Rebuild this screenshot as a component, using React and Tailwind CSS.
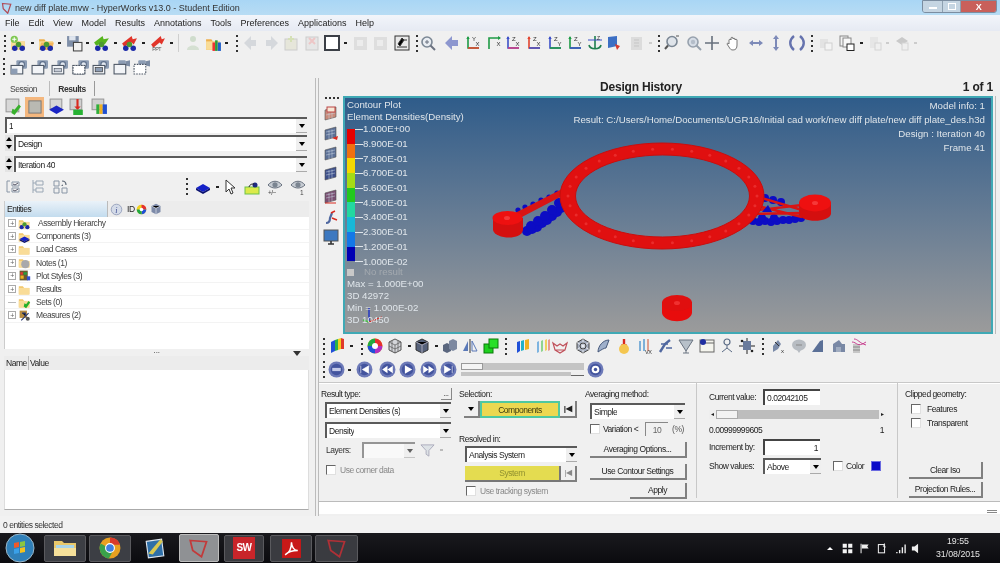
import React from "react";

const Blobs = () => (<>
  <circle cx="4.5" cy="12.5" r="2.6" fill="#1c2aa8"/><circle cx="11.5" cy="12.5" r="2.6" fill="#1c2aa8"/><circle cx="8" cy="9" r="2.6" fill="#4d9a30"/>
</>);
const Folder = ({f="#f2c66a"}) => (<><path d="M1 4h5l1.5 2H14v8H1z" fill={f}/><path d="M1 6h13v8H1z" fill="#f9dc97"/></>);
const Cam = ({b}) => (<>
  <rect x="6" y="2" width="10" height="8" rx="1" fill="#8d9db4"/><circle cx="11" cy="6" r="2.6" fill="#e2e8f0" stroke="#5d6f8a"/>
  <rect x="1" y="7" width="11" height="8" fill={b?"#dfe4ea":"#f2f4f7"} stroke="#4b5563"/>
</>);
const Axis = ({v,h,a,b,flip}) => (<>
  <path d={flip?"M14 3H3v11":"M3 2v11h11"} fill="none" stroke={flip?h:v} strokeWidth="1.6"/>
  <path d={flip?"M3 14H3":"M3 13h11"} fill="none" stroke={h} strokeWidth="1.6"/>
  <path d={flip?"M12 1l3 2-3 2z":"M1.3 4L3 1l1.7 3z"} fill={flip?h:v}/>
  <text x="7" y="6" fontSize="6" fontFamily="Liberation Sans" fill="#333">{a}</text><text x="10.5" y="11" fontSize="6" fontFamily="Liberation Sans" fill="#333">{b}</text>
</>);
const Pane = ({c="#5b6f96", e}) => (<>
  <path d="M2 4l11-3v10L2 14z" fill={c} stroke="#555" strokeWidth=".6"/><path d="M3 6l9-2M3 9l9-2M6 4v9M9 3.5v9" stroke="#c9d4e2" strokeWidth=".5"/>{e}
</>);
const Disc = () => (<><circle cx="8" cy="8" r="7.5" fill="#6d7ab8"/><circle cx="8" cy="8" r="5.4" fill="#43549e"/></>);

const kinds = {
  add: <><Folder/><circle cx="4" cy="4" r="3.4" fill="#7ec850"/><path d="M4 2v4M2 4h4" stroke="#fff"/><Blobs/></>,
  open: <><Folder f="#eeb04e"/><path d="M3 7h12l-2 7H1z" fill="#f5b65c"/><Blobs/></>,
  save: <><rect x="1" y="1" width="11" height="10" fill="#7f8fa8"/><rect x="3" y="1" width="6" height="4" fill="#dfe5ee"/><rect x="7" y="7" width="8" height="8" fill="#f1f1f1" stroke="#444"/></>,
  arG: <><path d="M1 7l8-6 1 3 5-1-4 6 -2-2-6 3z" fill="#57b51e"/><Blobs/></>,
  arR: <><path d="M1 8l9-7 1 3 4-1-3 6-2-2-7 4z" fill="#e1352a"/><Blobs/></>,
  ppt: <><path d="M2 9l9-8 1 3 3-1-3 6-2-2-6 5z" fill="#e1352a"/><text x="3" y="15.5" fontSize="5" fill="#555" fontFamily="Liberation Sans">PPT</text></>,
  person: <><circle cx="8" cy="4" r="3" fill="#cfdccc"/><path d="M2 15c0-6 12-6 12 0z" fill="#d5e0d2"/></>,
  fold: <><Folder f="#eeb04e"/><rect x="7" y="7" width="2.4" height="8" fill="#e33"/><rect x="9.5" y="5" width="2.4" height="10" fill="#2a9c3c"/><rect x="12" y="7" width="3" height="8" fill="#2460c8"/></>,
  diaL: <path d="M1 8l7-7v4h5v6H8v4z" fill="#d5d8dc"/>,
  diaR: <path d="M15 8L8 1v4H3v6h5v4z" fill="#d5d8dc"/>,
  docP: <><rect x="2" y="4" width="12" height="11" fill="#e6e6da" stroke="#ccc"/><path d="M8 1v6M5 4h6" stroke="#d5e0b6" strokeWidth="2"/></>,
  docX: <><rect x="2" y="2" width="12" height="13" fill="#e6e6e6" stroke="#ccc"/><path d="M5 3l6 6M11 3L5 9" stroke="#edc6c6" strokeWidth="2"/></>,
  sq: <rect x="1" y="1" width="14" height="14" fill="#fff" stroke="#3b3f46" strokeWidth="2"/>,
  grey: <><rect x="1" y="2" width="13" height="13" fill="#dedede"/><rect x="4" y="5" width="6" height="6" fill="#ececec"/></>,
  book: <><rect x="1" y="1" width="14" height="14" fill="#e9e9e9" stroke="#333"/><path d="M4 9l4-6 2 2-4 6zM8 5h5M3 12h10" stroke="#333"/></>,
  zoom: <><circle cx="7" cy="7" r="5" fill="#e9edf2" stroke="#7b8794" strokeWidth="1.6"/><path d="M10.5 10.5L15 15" stroke="#6b7280" strokeWidth="2"/><path d="M5 7h4M7 5v4" stroke="#6b7280"/></>,
  back: <path d="M1 8l7-7v4h6v6H8v4z" fill="#8d97cf"/>,
  ax1: <Axis v="#1f9b45" h="#e2452f" a="Y" b="X"/>,
  ax2: <Axis v="#e2452f" h="#1f9b45" a="" b="X" flip/>,
  ax3: <Axis v="#3c50c8" h="#cf3f82" a="Z" b="X"/>,
  ax4: <Axis v="#e2452f" h="#3c50c8" a="Z" b="X"/>,
  ax5: <Axis v="#3c50c8" h="#1f9b45" a="Z" b="Y"/>,
  ax6: <Axis v="#1f9b45" h="#3c50c8" a="Z" b="Y"/>,
  ax7: <><path d="M8 1v13M2 10c1 5 11 5 12 0" fill="none" stroke="#1f7f4f" strokeWidth="1.6"/><path d="M1 5h14" stroke="#3c50c8"/><text x="10" y="5" fontSize="5" fill="#333">Z</text></>,
  redbk: <><path d="M2 2l9-1v10l-9 2z" fill="#3d6fc4"/><path d="M9 9l5 2-3 4z" fill="#d83a2e"/></>,
  fade: <><rect x="2" y="2" width="11" height="13" fill="#dcdcdc"/><path d="M5 5h5M5 8h5M5 11h5" stroke="#c5c5c5"/></>,
  zm1: <><circle cx="8" cy="6.5" r="5" fill="#dfe4ea" stroke="#7b8794" strokeWidth="1.6"/><path d="M4 10.5L1 14" stroke="#555" strokeWidth="2"/><path d="M12 1h3" stroke="#555"/></>,
  zm2: <><circle cx="7" cy="7" r="5" fill="#d6dde6" stroke="#97a1ad" strokeWidth="1.6"/><circle cx="7" cy="7" r="2.2" fill="#b4bdc9"/><path d="M10.5 10.5L15 15" stroke="#97a1ad" strokeWidth="2"/></>,
  cross: <path d="M8 1v14M1 8h14" stroke="#67707c" strokeWidth="1.6"/>,
  hand: <path d="M4 9V5c0-1 2-1 2 0V3c0-1 2-1 2 0v1c0-1 2-1 2 0v1c0-1 2-1 2 0v5c0 3-1 5-4 5-2 0-3-1-4-3L2 9c0-1 1-1 2 0z" fill="#fff" stroke="#555" strokeWidth=".8"/>,
  lr: <path d="M1 8l4-3v2h6V5l4 3-4 3V9H5v2z" fill="#7d8ab8"/>,
  ud: <path d="M8 0l3 4H9v8h2l-3 4-3-4h2V4H5z" fill="#7d8ab8"/>,
  rot: <path d="M5 1C0 5 0 11 5 15M11 1c5 4 5 10 0 14" fill="none" stroke="#6673ae" strokeWidth="2.4"/>,
  pageF: <><rect x="2" y="4" width="8" height="9" fill="#e3e3e3"/><rect x="7" y="8" width="7" height="7" fill="#f4f4f4" stroke="#d0d0d0"/></>,
  page: <><rect x="1" y="1" width="8" height="10" fill="#f3f3f3" stroke="#888"/><rect x="4" y="3" width="8" height="9" fill="#f8f8f8" stroke="#888"/><rect x="8" y="9" width="7" height="6.5" fill="#fff" stroke="#222"/></>,
  pgG: <><rect x="3" y="2" width="8" height="11" fill="#e6e6e6"/><rect x="8" y="8" width="6" height="7" fill="#efefef" stroke="#d4d4d4"/></>,
  pgH: <><path d="M2 6l6-4 6 4-6 4z" fill="#c9c9c9"/><rect x="8" y="8" width="6" height="7" fill="#efefef" stroke="#d4d4d4"/></>,
  cam1: <><Cam/><rect x="1" y="10" width="6" height="5" fill="#8d9db4"/></>,
  cam2: <Cam/>,
  cam3: <><Cam/><rect x="3" y="10" width="7" height="3" fill="#c6ccd6" stroke="#4b5563" strokeWidth=".6"/></>,
  cam4: <><Cam/><rect x="1" y="7" width="11" height="8" fill="#fff" stroke="#4b5563" strokeDasharray="1.5 1"/></>,
  cam5: <><Cam/><rect x="3" y="9" width="7" height="4" fill="#8d9db4" stroke="#333" strokeWidth=".6"/></>,
  vid: <><rect x="5" y="2" width="7" height="6" rx="1" fill="#8d9db4"/><path d="M12 3l4-1v6l-4-1z" fill="#7c8ca4"/><rect x="1" y="6" width="11" height="9" fill="#f2f4f7" stroke="#4b5563"/></>,
  vid2: <><rect x="5" y="2" width="7" height="6" rx="1" fill="#8d9db4"/><path d="M12 3l4-1v6l-4-1z" fill="#7c8ca4"/><rect x="1" y="6" width="11" height="9" fill="#fff" stroke="#4b5563" strokeDasharray="1.5 1"/></>,
  tOk: <><rect x="1" y="1" width="12" height="12" fill="#d8d8d8" stroke="#999"/><path d="M6 14l3 2 6-8-2-2-4 5-2-1z" fill="#38b02c"/></>,
  tSq: <><rect x="2" y="2" width="13" height="13" fill="#b9b9b2" stroke="#777"/></>,
  tBlue: <><rect x="2" y="1" width="11" height="9" fill="#d6d6d6" stroke="#999"/><path d="M1 11l7-4 7 4-7 4z" fill="#1b25c4"/></>,
  tRed: <><rect x="1" y="1" width="11" height="10" fill="#d0d0d0" stroke="#999"/><path d="M8 1v9" stroke="#d9291f" strokeWidth="2"/><path d="M5 8l3 3 3-3" fill="#d9291f"/><path d="M4 11h9v5H4z" fill="#27b233"/></>,
  tColor: <><rect x="1" y="1" width="11" height="10" fill="#d0d0d0" stroke="#999"/><rect x="5" y="6" width="3" height="9" fill="#2fae3c"/><rect x="8" y="6" width="3" height="9" fill="#f0b020"/><rect x="11" y="6" width="4" height="9" fill="#2050d0"/></>,
  c1: <><path d="M2 2h3M2 2v11h3M7 3h7v4H7zM7 9h7v4H7z" fill="none" stroke="#8996a6"/><path d="M8 5l2 1 3-2M8 11l2 1 3-2" fill="none" stroke="#556"/></>,
  c2: <><path d="M3 1v13M3 4h3M3 11h3M6 2h7v4H6zM6 9h7v4H6z" fill="none" stroke="#9aa7b5"/></>,
  c3: <><path d="M2 2h5v5H2zM2 9h5v5H2zM10 9h5v5h-5z" fill="none" stroke="#8996a6"/><path d="M10 2c3 0 4 2 4 4M11 6c-1 0-1 1-1 1" fill="none" stroke="#5d6875" strokeWidth="1.2"/></>,
  cube: <><path d="M1 9l7-4 7 4-7 4z" fill="#1421c8"/><path d="M1 9v2l7 4 7-4V9l-7 4z" fill="#0b1270"/></>,
  cur: <path d="M4 1v12l3-3 2 5 2-1-2-5h4z" fill="#fff" stroke="#333"/>,
  yel: <><rect x="1" y="8" width="14" height="7" fill="#dcea4a" stroke="#6cc24a"/><circle cx="11" cy="6" r="2.5" fill="#1d2a80"/><path d="M5 8c1-3 3-3 5-3" stroke="#222" fill="none"/></>,
  eye: <><path d="M1 6c4-5 10-5 14 0-4 4-10 4-14 0z" fill="#c7ccd3" stroke="#69727f"/><circle cx="8" cy="5.8" r="2.6" fill="#7b8591"/><text x="1" y="15.5" fontSize="6.5" fill="#444" fontFamily="Liberation Sans">+/−</text></>,
  eye1: <><path d="M1 6c4-5 10-5 14 0-4 4-10 4-14 0z" fill="#c7ccd3" stroke="#69727f"/><circle cx="8" cy="5.8" r="2.6" fill="#7b8591"/><text x="10" y="15.5" fontSize="6.5" fill="#444" fontFamily="Liberation Sans">1</text></>,
  info: <><circle cx="8" cy="8" r="6.5" fill="#d4dbe8" stroke="#8d97b5"/><text x="6.5" y="12" fontSize="10" fontStyle="italic" fontFamily="Liberation Serif" fill="#3a4a90">i</text></>,
  wheelS: <><circle cx="8" cy="8" r="7" fill="#f0d020"/><path d="M8 8L8 1A7 7 0 0 1 15 8z" fill="#e53030"/><path d="M8 8L15 8A7 7 0 0 1 8 15z" fill="#2050d8"/><path d="M8 8L8 15A7 7 0 0 1 1 8z" fill="#22a840"/><circle cx="8" cy="8" r="2.6" fill="#fff"/></>,
  cubeG: <><path d="M2 4l6-3 6 3v8l-6 3-6-3z" fill="#7d8aa8"/><path d="M2 4l6 3 6-3M8 7v8" stroke="#d8dde8"/></>,
  tAsm: <><Folder/><Blobs/></>,
  tCmp: <><Folder/><path d="M2 11l6-3 6 3-6 3z" fill="#1421c8"/><path d="M2 11v2l6 3 6-3v-2l-6 3z" fill="#0b1270"/></>,
  tFold: <Folder/>,
  tNote: <><Folder/><circle cx="9" cy="10" r="5" fill="#a9a9ab"/></>,
  tPlot: <><rect x="2" y="2" width="10" height="12" fill="#6a5a30"/><rect x="3" y="4" width="3" height="3" fill="#e33"/><rect x="7" y="4" width="4" height="3" fill="#2a9c3c"/><rect x="3" y="8" width="4" height="4" fill="#f0b020"/><rect x="11" y="9" width="4" height="5" fill="#3050d0"/></>,
  tSets: <><Folder/><path d="M7 13l3 2 5-7-2-2-3 4-2-1z" fill="#24b02a"/></>,
  tMeas: <><rect x="2" y="2" width="9" height="9" fill="#b58b40"/><path d="M4 14l9-9M5 5h4v4" stroke="#2b3a70" strokeWidth="1.4"/><circle cx="12" cy="12" r="2.5" fill="#555"/></>,
  rainbow: <><path d="M1 4l4-2v11l-4 2z" fill="#2050d8"/><path d="M5 2l3-1v11l-3 1z" fill="#2bb04a"/><path d="M8 1l3-1v11l-3 1z" fill="#f0d020"/><path d="M11 0l3 1v10l-3 0z" fill="#e03a2a"/></>,
  wheel: <><circle cx="8" cy="8" r="7.5" fill="#f0d020"/><path d="M8 8V.5A7.5 7.5 0 0 1 15.5 8z" fill="#e53030"/><path d="M8 8h7.5A7.5 7.5 0 0 1 8 15.5z" fill="#b030c0"/><path d="M8 8v7.5A7.5 7.5 0 0 1 .5 8z" fill="#2050d8"/><path d="M8 8H.5A7.5 7.5 0 0 1 8 .5z" fill="#22a840"/><circle cx="8" cy="8" r="3" fill="#fff"/></>,
  mesh: <><path d="M2 4l6-3 6 3v8l-6 3-6-3z" fill="#d4d6da" stroke="#555"/><path d="M2 8l6 3 6-3M5 3v10M11 3v10M2 4l6 3 6-3M8 7v8" stroke="#555" strokeWidth=".7" fill="none"/></>,
  solid: <><path d="M2 4l6-3 6 3v8l-6 3-6-3z" fill="#56617a" stroke="#333"/><path d="M2 4l6 3 6-3M8 7v8" stroke="#aab"/></>,
  multi: <><path d="M1 7l4-2 4 2v6l-4 2-4-2z" fill="#5a667e"/><path d="M7 3l4-2 4 2v8l-4 2-4-2z" fill="#7c88a0"/></>,
  mirror: <><path d="M6 3L1 13h5z" fill="#5a79b8"/><path d="M10 3l5 10h-5z" fill="none" stroke="#5a79b8"/><path d="M8 1v14" stroke="#333"/></>,
  green: <><rect x="1" y="6" width="9" height="9" fill="#1fd01f" stroke="#0a7a0a"/><rect x="6" y="1" width="9" height="9" fill="#29e029" stroke="#0a7a0a"/></>,
  rb2: <><path d="M2 4l3-1v10l-3 2z" fill="#2050d8"/><path d="M6 3l3-1v10l-3 1z" fill="#22b0c8"/><path d="M10 2l4-1v10l-4 1z" fill="#f0b020"/></>,
  rb3: <><path d="M2 4l2-1v11l-2 1z" fill="#7eb4e0"/><path d="M6 3l2-1v11l-2 1z" fill="#8fd48f"/><path d="M10 2l2-1v11l-2 1z" fill="#f0d060"/><path d="M13 2l2-1v11l-2 1z" fill="#e89a90"/></>,
  cup: <path d="M1 5l4 3 3-2 3 2 4-3-2 7H3zM3 12l5 3 5-3" fill="none" stroke="#c0505a" strokeWidth="1.2"/>,
  wire: <><path d="M8 1l6 3.5v7L8 15l-6-3.5v-7z" fill="#a7afc0" stroke="#444"/><path d="M8 1v14M2 4.5l12 7M14 4.5l-12 7" stroke="#fff" strokeWidth=".7"/><circle cx="8" cy="8" r="3" fill="none" stroke="#444"/></>,
  wing: <path d="M2 14c0-6 5-12 11-12l-3 8c-2 0-5 2-8 4z" fill="#9fb0cb" stroke="#46587a"/>,
  flame: <><path d="M8 1v6" stroke="#d9291f" strokeWidth="2.4"/><path d="M5 6l3 3 3-3z" fill="#d9291f"/><circle cx="8" cy="11" r="5" fill="#f4c650"/></>,
  rbx: <><path d="M2 3h2v10H2zM6 1h2v12H6z" fill="#7fb0d8"/><path d="M10 1h2v12h-2z" fill="#e0a090"/><text x="8" y="16" fontSize="5.5" fill="#333" fontFamily="Liberation Sans">VX</text></>,
  run: <><path d="M2 14l5-8 5-4" fill="none" stroke="#5068a0" strokeWidth="2.4"/><path d="M3 6h7M8 10h6" stroke="#5068a0" strokeWidth="1.4"/></>,
  dish: <><path d="M1 2h14L8 13z" fill="#b7c0c9" stroke="#687280"/><path d="M8 13v2M5 15h6" stroke="#687280"/></>,
  note: <><rect x="1" y="2" width="14" height="12" fill="#f5f5ee" stroke="#666"/><path d="M1 5h14" stroke="#666"/><circle cx="4" cy="4" r="3" fill="#2030a0"/></>,
  node: <><circle cx="8" cy="4" r="3" fill="none" stroke="#5a6b85" strokeWidth="1.2"/><path d="M8 7v3L3 14M8 10l5 4" fill="none" stroke="#5a6b85"/></>,
  box: <><rect x="4" y="3" width="8" height="9" fill="#6a7b9c"/><path d="M8 0v3M8 12v4M0 8h4M12 8h4" stroke="#222"/><circle cx="3" cy="3" r="1.3" fill="#222"/><circle cx="13" cy="13" r="1.3" fill="#222"/></>,
  vx: <><path d="M2 14V8l5-6 3 4-3 5z" fill="#7a8aa8"/><path d="M4 4l4 4" stroke="#333"/><text x="10" y="15" fontSize="6" fill="#333" fontFamily="Liberation Sans">x</text></>,
  bub: <><ellipse cx="8" cy="7" rx="7" ry="5.5" fill="#b7bcc2"/><path d="M6 12l2 3 2-3z" fill="#b7bcc2"/><path d="M5 7h6" stroke="#888"/></>,
  slope: <path d="M1 14l8-11 3-1v12z" fill="#5b7097"/>,
  cars: <><path d="M2 6l6-4 3 4h3v8H2z" fill="#7988a5"/><path d="M5 14V9h5v5" fill="#a0acc0"/></>,
  cut: <><rect x="2" y="6" width="7" height="9" fill="#c7c7c7"/><path d="M2 9h7M2 12h7" stroke="#888"/><path d="M1 4c5 0 5 6 14 0M3 1c4 0 5 4 12 6" fill="none" stroke="#c8408f"/></>,
  play0: <><Disc/><rect x="4" y="6.5" width="8" height="3" fill="#c4cae8"/></>,
  first: <><Disc/><path d="M4.5 4.5v7M12 4.5L6 8l6 3.5z" fill="#fff" stroke="#fff" strokeWidth=".6"/></>,
  rew: <><Disc/><path d="M8 4.5L3 8l5 3.5zM13 4.5L8 8l5 3.5z" fill="#fff"/></>,
  play: <><Disc/><path d="M5.5 4l7 4-7 4z" fill="#fff"/></>,
  ff: <><Disc/><path d="M8 4.5L13 8l-5 3.5zM3 4.5L8 8l-5 3.5z" fill="#fff"/></>,
  last: <><Disc/><path d="M11.5 4.5v7M4 4.5L10 8l-6 3.5z" fill="#fff" stroke="#fff" strokeWidth=".6"/></>,
  gear: <><Disc/><circle cx="8" cy="8" r="3.6" fill="#fff"/><circle cx="8" cy="8" r="1.6" fill="#43549e"/></>,
  s1: <Pane c="#c98a7a" e={<rect x="4" y="1" width="8" height="5" fill="#f7e7d6" stroke="#b44"/>}/>,
  s2: <Pane e={<path d="M9 12l6-2-1 4z" fill="#d92a20"/>}/>,
  s3: <Pane/>,
  s4: <Pane c="#3d4f8a"/>,
  s5: <Pane c="#7a4f72" e={<path d="M2 14h11" stroke="#d92a20"/>}/>,
  s6: <><path d="M3 14c4 0 4-3 4-5l2-5" fill="none" stroke="#5068a0" strokeWidth="2.2"/><path d="M8 4l4-2M9 9l5 2" stroke="#d92a20" strokeWidth="1.4"/></>,
  s7: <><rect x="1" y="1" width="14" height="11" fill="#3c78c0" stroke="#555"/><path d="M5 15h6M8 12v3" stroke="#333" strokeWidth="1.6"/></>,
};

const I = ({ k, c = "", s = "w-4 h-4" }) => <svg viewBox="0 0 16 16" className={`${s} shrink-0 ${c}`}>{kinds[k]}</svg>;
const L = "w-[17px] h-[17px]";
const Dd = ({ c = "" }) => <span className={`w-[3px] h-[2px] bg-[#222] shrink-0 ${c}`} />;
const Grip = ({ c = "" }) => (
  <span className={`flex flex-col gap-[3px] shrink-0 ${c}`}>
    {[0, 1, 2, 3].map(i => <span key={i} className="w-[2px] h-[2px] bg-[#333]" />)}
  </span>
);
const Arrow = () => <span className="w-0 h-0 border-l-[3.5px] border-r-[3.5px] border-t-[4px] border-l-transparent border-r-transparent border-t-black" />;
const Combo = ({ t, c = "", dim }) => (
  <div className={`h-[16px] bg-white border-t-2 border-l-2 border-t-[#5a5a5a] border-l-[#5a5a5a] flex items-center justify-between ${c}`}>
    <span className={`pl-[2px] truncate ${dim ? "text-[#888]" : ""}`}>{t}</span>
    <span className="w-[11px] h-full bg-[#efefef] border-b border-b-[#aaa] flex items-center justify-center shrink-0"><Arrow /></span>
  </div>
);
const Spin = () => (
  <div className="w-[8px] h-[16px] flex flex-col justify-around items-center bg-[#e4e4e4] shrink-0">
    <span className="w-0 h-0 border-l-[3px] border-r-[3px] border-b-[4px] border-l-transparent border-r-transparent border-b-black" />
    <Arrow />
  </div>
);
const Btn = ({ t, c = "", dim }) => (
  <div className={`bg-[#f0f0f0] border-r-2 border-b-2 border-r-[#808080] border-b-[#808080] flex items-center justify-center whitespace-nowrap ${dim ? "text-[#888]" : ""} ${c}`}>{t}</div>
);
const Chk = ({ c = "" }) => <span className={`w-[10px] h-[10px] bg-white border-t border-l border-t-[#666] border-l-[#666] border-r border-b border-r-[#e0e0e0] border-b-[#e0e0e0] shrink-0 ${c}`} />;
const Input = ({ t, c = "" }) => <div className={`h-[16px] bg-white border-t-2 border-l-2 border-t-[#444] border-l-[#444] flex items-center px-[2px] ${c}`}>{t}</div>;

const tree = [
  ["tAsm", "Assembly Hierarchy", true, "pl-[2px]"],
  ["tCmp", "Components (3)", true, ""],
  ["tFold", "Load Cases", true, ""],
  ["tNote", "Notes (1)", true, ""],
  ["tPlot", "Plot Styles (3)", true, ""],
  ["tFold", "Results", true, ""],
  ["tSets", "Sets  (0)", false, ""],
  ["tMeas", "Measures (2)", true, ""],
];
const legend = ["1.000E+00","8.900E-01","7.800E-01","6.700E-01","5.600E-01","4.500E-01","3.400E-01","2.300E-01","1.200E-01","1.000E-02"];
const bands = ["bg-[#e60000]","bg-[#f07010]","bg-[#f5d800]","bg-[#a5dc14]","bg-[#22c81e]","bg-[#22d8a0]","bg-[#18b8d8]","bg-[#1478e8]","bg-[#0000b4]"];
const ringDots = Array.from({ length: 30 }, (_, i) => i * Math.PI / 15);
const blueL = [[525,229],[530,227],[535,225],[540,221],[545,218],[550,214],[555,210],[559,206],[529,224],[536,219],[543,214],[550,208],[557,201]];
const blueLTop = [[516,208],[523,205],[531,202],[539,198],[547,195],[555,191]];
const blueR = [[745,218],[751,219],[757,220],[763,219],[769,220],[775,219],[781,218],[787,218],[793,217],[799,216],[748,216],[760,216],[772,216],[755,193],[763,196],[771,198],[779,200]];

const Scene = () => (
  <svg viewBox="343 96 646 234" className="absolute inset-0 w-full h-full">
    {blueLTop.map(([x, y], i) => <circle key={i} cx={x} cy={y} r="2.600" fill="#0c0cc4" />)}
    {blueL.map(([x, y], i) => <circle key={i} cx={x} cy={y} r="5" fill="#0c0cc4" />)}
    <path d="M513 211l47-24 2 6-44 23z" fill="#d81414" />
    <path d="M491 216v12c2 9 28 11 30 0v-12z" fill="#d40f0f" />
    <ellipse cx="505.500" cy="216" rx="15" ry="7" fill="#ee1010" /><ellipse cx="505" cy="216" rx="3" ry="2" fill="#f63838" />
    {blueR.map(([x, y], i) => <circle key={i} cx={x} cy={y} r="4" fill="#0c0cc4" />)}
    <path d="M748 209l52-6M752 203l48 12M745 212l55-1M756 195l44 13" stroke="#d81414" strokeWidth="2.400" fill="none" />
    <path d="M766 203l-6 7 10 0z" fill="#0c0cc4" />
    <path d="M797 200v12c2 9 30 9 32 0v-12z" fill="#d40f0f" />
    <ellipse cx="813" cy="201" rx="16" ry="8.500" fill="#ee1010" /><ellipse cx="813" cy="201" rx="3" ry="2" fill="#f63838" />
    <path fillRule="evenodd" d="M558 194a102 53 0 1 0 204 0a102 53 0 1 0 -204 0zM573.500 194a87 41 0 1 1 174 0a87 41 0 1 1 -174 0z" fill="#e01010" stroke="#c80e0e" />
    {ringDots.map((a, i) => <circle key={i} cx={660.500 + 94.500 * Math.cos(a)} cy={194 + 47 * Math.sin(a)} r="1.500" fill="#ea2c2c" />)}
    <path d="M660 300v11c2 11 28 11 30 0v-11z" fill="#e80c0c" />
    <ellipse cx="675" cy="301" rx="15" ry="8" fill="#e00f0f" /><ellipse cx="675" cy="301" rx="3" ry="2" fill="#f03030" />
    <path d="M367 306v14" stroke="#2a3cc0" strokeWidth="1.600" /><path d="M367 320l13-5" stroke="#d9291f" strokeWidth="1.200" /><path d="M367 320l-6-2" stroke="#4cc04c" strokeWidth="1.600" />
  </svg>
);

export default function App() {
  return (
    <div className="w-[1000px] h-[563px] overflow-hidden flex flex-col bg-[#f0f0f0] text-[8.5px] tracking-[-0.45px] leading-[12px] text-[#222] blur-[0.35px] font-['Liberation_Sans',Arial,sans-serif]">
      {/* title */}
      <div className="h-[15px] flex items-center bg-gradient-to-b from-[#a9d6f5] to-[#b7dcf4] relative shrink-0">
        <svg viewBox="0 0 16 16" className="w-3 h-3 ml-[1px]"><path d="M2 2l11 1-4 12L3 9z" fill="none" stroke="#b04a55" strokeWidth="1.600" /></svg>
        <span className="ml-[2px] text-[9px] tracking-normal text-[#333]">new diff plate.mvw - HyperWorks v13.0 - Student Edition</span>
        <div className="ml-auto mr-[3px] flex h-[13px] self-start border border-[#7b8da0] rounded-b-[3px] overflow-hidden">
          <span className="w-[19px] bg-[#c5d5e2] flex items-end justify-center pb-[3px]"><span className="w-[8px] h-[2px] bg-white" /></span>
          <span className="w-[19px] bg-[#c5d5e2] border-x border-x-[#8da0b0] flex items-center justify-center"><span className="w-[8px] h-[7px] border border-white" /></span>
          <span className="w-[35px] bg-[#c9605a] text-white text-[9px] font-bold flex items-center justify-center">X</span>
        </div>
      </div>
      {/* menu */}
      <div className="h-[16px] flex items-center gap-[9px] pl-[5px] bg-gradient-to-b from-[#f2f5fa] to-[#e6eaf3] text-[#222] text-[9px] tracking-normal shrink-0">
        {["File","Edit","View","Model","Results","Annotations","Tools","Preferences","Applications","Help"].map(m => <span key={m}>{m}</span>)}
      </div>
      {/* toolbar 1 */}
      <div className="h-[24px] flex items-center shrink-0">
        <Grip c="ml-[4px]" /><I k="add" s={L} c="ml-[4px]" /><Dd c="ml-[4px]" /><I k="open" s={L} c="ml-[4px]" /><Dd c="ml-[3px]" /><I k="save" s={L} c="ml-[5px]" /><Dd c="ml-[3px]" />
        <I k="arG" s={L} c="ml-[4px]" /><Dd c="ml-[4px]" /><I k="arR" s={L} c="ml-[4px]" /><Dd c="ml-[4px]" /><I k="ppt" s={L} c="ml-[4px]" /><Dd c="ml-[4px]" /><span className="w-px h-[18px] bg-[#cfcfcf] ml-[5px] shrink-0" />
        <I k="person" c="ml-[6px]" /><I k="fold" s={L} c="ml-[4px]" /><Dd c="ml-[3px]" /><Grip c="ml-[8px]" /><I k="diaL" c="ml-[5px]" /><I k="diaR" c="ml-[4px]" /><I k="docP" c="ml-[4px]" /><I k="docX" c="ml-[5px]" /><I k="sq" c="ml-[4px]" /><Dd c="ml-[4px]" />
        <I k="grey" c="ml-[6px]" /><I k="grey" c="ml-[4px]" /><I k="book" c="ml-[5px]" /><Grip c="ml-[6px]" /><I k="zoom" c="ml-[2px]" /><I k="back" c="ml-[8px]" /><I k="ax1" c="ml-[5px]" /><I k="ax2" c="ml-[5px]" /><I k="ax3" c="ml-[3px]" /><I k="ax4" c="ml-[5px]" /><I k="ax5" c="ml-[5px]" /><I k="ax6" c="ml-[4px]" /><I k="ax7" c="ml-[4px]" /><I k="redbk" c="ml-[3px]" /><I k="fade" c="ml-[7px]" /><span className="w-[3px] h-[2px] bg-[#ccc] ml-[4px] shrink-0" />
        <Grip c="ml-[6px]" /><I k="zm1" c="ml-[4px]" /><I k="zm2" c="ml-[6px]" /><I k="cross" c="ml-[2px]" /><I k="hand" c="ml-[5px]" /><I k="lr" c="ml-[7px]" /><I k="ud" c="ml-[4px]" /><I k="rot" c="ml-[5px]" /><Grip c="ml-[6px]" />
        <I k="pageF" c="ml-[5px]" /><I k="page" c="ml-[5px]" /><Dd c="ml-[5px]" /><I k="pgG" c="ml-[4px]" /><span className="w-[3px] h-[2px] bg-[#ccc] ml-[3px] shrink-0" /><I k="pgH" c="ml-[5px]" /><span className="w-[3px] h-[2px] bg-[#ccc] ml-[4px] shrink-0" />
      </div>
      {/* toolbar 2 */}
      <div className="h-[23px] flex items-center gap-[3.5px] shrink-0">
        <Grip c="ml-[3px] mr-[1.5px]" />
        {["cam1","cam2","cam3","cam4","cam5","vid","vid2"].map(k => <I key={k} k={k} s={L} />)}
      </div>
      {/* main */}
      <div className="flex-1 min-h-0 flex">
        {/* left */}
        <div className="w-[316px] shrink-0 flex flex-col border-r border-r-[#bbb]">
          <div className="h-[18px] flex items-end pl-[10px] shrink-0">
            <span className="w-[39px] pb-[1px] text-[#444]">Session</span>
            <span className="h-[15px] w-[46px] border-l border-r border-l-[#bbb] border-r-[#999] flex items-center justify-center font-bold text-[#333]">Results</span>
          </div>
          <div className="h-[21px] flex items-center pl-[5px] gap-[3px] shrink-0">
            <I k="tOk" s={L} />
            <span className="w-[19px] h-[20px] bg-[#f4b77e] flex items-center justify-center"><I k="tSq" s="w-[15px] h-[15px]" /></span>
            <I k="tBlue" s={L} c="ml-[1px]" /><I k="tRed" s={L} c="ml-[1px]" /><I k="tColor" s={L} c="ml-[2px]" />
          </div>
          <Combo t="1" c="ml-[5px] mr-[8px] shrink-0" />
          <div className="flex ml-[5px] mr-[8px] mt-[2px] shrink-0"><Spin /><Combo t="Design" c="flex-1 ml-[1px]" /></div>
          <div className="flex ml-[5px] mr-[8px] mt-[5px] shrink-0"><Spin /><Combo t="Iteration 40" c="flex-1 ml-[1px]" /></div>
          <div className="h-[29px] flex items-center shrink-0">
            <I k="c1" c="ml-[5px]" /><I k="c2" c="ml-[9px]" /><I k="c3" c="ml-[6px]" />
            <Grip c="ml-[118px]" /><I k="cube" c="ml-[7px]" /><Dd c="ml-[5px]" /><I k="cur" c="ml-[3px]" /><I k="yel" c="ml-[6px]" /><I k="eye" c="ml-[7px]" /><I k="eye1" c="ml-[7px]" />
          </div>
          {/* entity tree */}
          <div className="ml-[4px] mr-[6px] h-[148px] flex flex-col bg-white border-l border-l-[#ccc] shrink-0">
            <div className="h-[16px] flex items-center bg-[#ececec] shrink-0">
              <span className="w-[103px] h-full flex items-center pl-[2px] bg-gradient-to-b from-[#eaf2f9] to-[#c3dcee] border-r border-r-[#bbb]">Entities</span>
              <I k="info" s="w-[13px] h-[13px]" c="ml-[2px]" /><span className="ml-[4px]">ID</span><I k="wheelS" s="w-[11px] h-[11px]" c="ml-[1px]" /><I k="cubeG" s="w-[12px] h-[12px]" c="ml-[3px]" />
            </div>
            {tree.map(([k, t, plus, p]) => (
              <div key={t} className="h-[13.200px] flex items-center shrink-0 border-b border-b-[#f3f3f3]">
                {plus ? <span className="ml-[3px] w-[8px] h-[8px] border border-[#aaa] flex items-center justify-center text-[7px] leading-none text-[#666]">+</span> : <span className="ml-[3px] w-[8px] h-px bg-[#bbb]" />}
                <I k={k} s="w-[13px] h-[13px]" c="ml-[2px]" />
                <span className={`ml-[5px] text-[#444] ${p}`}>{t}</span>
              </div>
            ))}
          </div>
          <div className="h-[7px] ml-[4px] mr-[6px] flex items-center justify-center relative shrink-0">
            <span className="text-[8px] leading-none text-[#555]">···</span>
            <span className="absolute right-[8px] top-[2px] w-0 h-0 border-l-[4px] border-r-[4px] border-t-[5px] border-l-transparent border-r-transparent border-t-[#333]" />
          </div>
          <div className="ml-[4px] mr-[6px] h-[14px] flex items-center bg-[#ececec] shrink-0">
            <span className="pl-[2px] pr-[1px] h-full flex items-center border-r border-r-[#bbb]">Name</span><span className="pl-px">Value</span>
          </div>
          <div className="flex-1 ml-[4px] mr-[6px] mb-[6px] bg-white border-b border-b-[#aaa] border-x border-x-[#ddd]" />
        </div>
        {/* right */}
        <div className="flex-1 min-w-0 flex flex-col ml-[2px] border-l border-l-[#bbb]">
          <div className="h-[18px] flex items-center relative shrink-0 font-bold text-[#222] text-[12px] tracking-[-0.2px]">
            <span className="ml-[281px]">Design History</span>
            <span className="ml-auto mr-[7px]">1 of 1</span>
          </div>
          <div className="flex shrink-0">
            <div className="w-[24px] h-[238px] flex flex-col items-center shrink-0">
              <span className="flex gap-[2px] mt-[1px] mb-[7px] ml-[1px]">{[0,1,2,3].map(i => <span key={i} className="w-[2px] h-[2px] bg-[#333]" />)}</span>
              <I k="s1" /><I k="s2" c="mt-[4px]" /><I k="s3" c="mt-[4px]" /><I k="s4" c="mt-[4px]" /><I k="s5" c="mt-[7px]" /><I k="s6" c="mt-[4px]" /><I k="s7" c="mt-[4px]" />
            </div>
            <div className="w-[650px] h-[238px] border-2 border-[#3fa9b5] bg-gradient-to-b from-[#2f5c8a] to-[#9b9b9b] relative text-[9.700px] tracking-normal leading-[12px] text-[#dfe5ea] overflow-hidden shrink-0">
              <Scene />
              <div className="relative pl-[2px] pt-[1px] flex flex-col">
                <span>Contour Plot</span>
                <span>Element Densities(Density)</span>
                <div className="flex mt-[-1px]">
                  <div className="w-[8px] mt-[7px] flex flex-col shrink-0">{bands.map(b => <span key={b} className={`h-[14.700px] ${b}`} />)}</div>
                  <div className="flex flex-col">
                    {legend.map(l => <span key={l} className="h-[14.700px] flex items-center"><span className="w-[8px] h-px bg-[#dfe5ea]" />{l}</span>)}
                  </div>
                </div>
                <span className="mt-[-2px] flex items-center text-[#a3a9af] h-[11px]"><span className="w-[7px] h-[7px] bg-[#c8c8c8] mr-[10px]" />No result</span>
                <span>Max = 1.000E+00</span>
                <span>3D 42972</span>
                <span>Min = 1.000E-02</span>
                <span>3D 10450</span>
              </div>
              <div className="absolute right-[6px] top-[1px] text-right flex flex-col leading-[14px]">
                <span>Model info: 1</span>
                <span>Result:  C:/Users/Home/Documents/UGR16/Initial cad work/new diff plate/new diff plate_des.h3d</span>
                <span>Design : Iteration 40</span>
                <span>Frame 41</span>
              </div>
            </div>
            <span className="w-px h-[238px] bg-[#bbb] ml-[2px]" />
          </div>
          {/* result toolbars */}
          <div className="h-[23px] flex items-center pt-[1px] shrink-0">
            <Grip c="ml-[4px]" /><I k="rainbow" c="ml-[5px]" /><Dd c="ml-[4px]" /><Grip c="ml-[8px]" /><I k="wheel" c="ml-[4px]" /><I k="mesh" c="ml-[4px]" /><Dd c="ml-[5px]" /><I k="solid" c="ml-[3px]" /><Dd c="ml-[5px]" /><I k="multi" c="ml-[4px]" /><I k="mirror" c="ml-[4px]" /><I k="green" c="ml-[5px]" /><Grip c="ml-[6px]" />
            <I k="rb2" c="ml-[8px]" /><I k="rb3" c="ml-[4px]" /><I k="cup" c="ml-[1px]" /><I k="wire" c="ml-[7px]" /><I k="wing" c="ml-[5px]" /><I k="flame" c="ml-[4px]" /><I k="rbx" c="ml-[5px]" /><I k="run" c="ml-[5px]" /><I k="dish" c="ml-[4px]" /><I k="note" c="ml-[5px]" /><I k="node" c="ml-[4px]" /><I k="box" c="ml-[4px]" /><Grip c="ml-[7px]" /><I k="vx" c="ml-[7px]" /><I k="bub" c="ml-[4px]" /><I k="slope" c="ml-[4px]" /><I k="cars" c="ml-[4px]" /><I k="cut" c="ml-[4px]" />
          </div>
          <div className="h-[25px] flex items-center shrink-0">
            <Grip c="ml-[4px]" /><I k="play0" s={L} c="ml-[3px]" /><Dd c="ml-[3px]" />
            <I k="first" s={L} c="ml-[4.500px]" /><I k="rew" s={L} c="ml-[6px]" /><I k="play" s={L} c="ml-[3.500px]" /><I k="ff" s={L} c="ml-[3.500px]" /><I k="last" s={L} c="ml-[3.500px]" />
            <div className="ml-[3.500px] w-[123px] flex flex-col gap-[2px]">
              <div className="h-[7px] bg-[#c4c4c4]"><div className="w-[22px] h-full bg-[#f4f4f4] border border-[#999]" /></div>
              <div className="h-[4px] bg-[#c4c4c4] flex justify-end"><div className="w-[13px] h-full bg-[#efefef] border-b border-b-[#666]" /></div>
            </div>
            <I k="gear" s={L} c="ml-[3.500px]" />
          </div>
          {/* form */}
          <div className="h-[119px] flex border-t border-t-[#c8c8c8] shadow-[inset_0_1px_0_#fff] shrink-0">
            <div className="w-[140px] pt-[5px] pl-[2px] shrink-0">
              <div className="flex justify-between pr-[7px] h-[12px]"><span>Result type:</span><span className="w-[11px] h-[12px] border-r border-b border-r-[#888] border-b-[#888] flex items-center justify-center text-[8px]">...</span></div>
              <Combo t="Element Densities (s)" c="mt-[2px] ml-[4px] w-[126px]" />
              <Combo t="Density" c="mt-[4px] ml-[4px] w-[126px]" />
              <div className="flex items-center mt-[4px] h-[16px]">
                <span className="ml-[5px] w-[36px] text-[#333]">Layers:</span>
                <Combo t="" c="w-[53px] opacity-60" />
                <svg viewBox="0 0 16 16" className="w-[17px] h-[15px] ml-[4px]"><path d="M1 2h14L9.500 8v6l-3-2V8z" fill="#dde2e6" stroke="#aab" /></svg>
                <span className="w-[3px] h-[2px] bg-[#bbb] ml-[4px]" />
              </div>
              <div className="flex items-center mt-[6px] h-[12px] text-[#888]"><Chk c="ml-[5px] bg-[#e8e8e8]" /><span className="ml-[4px]">Use corner data</span></div>
            </div>
            <div className="w-[126px] pt-[5px] shrink-0">
              <div className="h-[12px]">Selection:</div>
              <div className="flex ml-[5px] mt-[1px] h-[17px]">
                <Btn t={<Arrow />} c="w-[16px]" />
                <div className="w-[80px] bg-[#ecd850] border-2 border-[#4fc8a0] flex items-center justify-center text-[#3a3a10]">Components</div>
                <Btn t={<span className="font-bold text-[8px]">|◀</span>} c="w-[17px]" />
              </div>
              <div className="mt-[15px] h-[12px]">Resolved in:</div>
              <Combo t="Analysis System" c="mt-[1px] ml-[6px] w-[112px]" />
              <div className="flex ml-[6px] mt-[4px] h-[16px]">
                <div className="w-[96px] bg-[#e4dc50] border-r-2 border-b-2 border-r-[#777] border-b-[#777] flex items-center justify-center text-[#909030]">System</div>
                <Btn t={<span className="text-[8px]">|◀</span>} c="w-[16px]" dim />
              </div>
              <div className="flex items-center mt-[3px] ml-[7px] h-[12px] text-[#888]"><Chk c="bg-[#e8e8e8]" /><span className="ml-[4px]">Use tracking system</span></div>
            </div>
            <div className="w-[112px] pt-[5px] border-r border-r-[#c8c8c8] mb-[3px] shrink-0">
              <div className="h-[12px]">Averaging method:</div>
              <Combo t="Simple" c="mt-[3px] ml-[5px] w-[95px]" />
              <div className="flex items-center mt-[3px] ml-[5px] h-[14px]">
                <Chk /><span className="w-[42px] ml-[3px]">Variation &lt;</span>
                <span className="w-[23px] h-[14px] border-t border-l border-t-[#888] border-l-[#888] flex items-center justify-center text-[#666]">10</span>
                <span className="ml-[4px] text-[#555]">(%)</span>
              </div>
              <Btn t="Averaging Options..." c="mt-[6px] ml-[5px] w-[97px] h-[16px]" />
              <Btn t="Use Contour Settings" c="mt-[6px] ml-[5px] w-[97px] h-[16px]" />
              <Btn t="Apply" c="mt-[3px] ml-[45px] w-[57px] h-[16px]" />
            </div>
            <div className="w-[201px] pt-[6px] pl-[12px] border-r border-r-[#c8c8c8] mb-[3px] shrink-0">
              <div className="flex items-center h-[16px]"><span className="w-[54px] whitespace-nowrap">Current value:</span><Input t="0.02042105" c="w-[57px]" /></div>
              <div className="mt-[5px] w-[177px] h-[9px] bg-[#bdbdbd] flex items-center justify-between">
                <span className="w-[7px] h-full bg-[#eee] text-[6px] leading-[9px] text-center">◂</span>
                <span className="w-[22px] h-full bg-[#f2f2f2] border border-[#aaa] mr-auto" />
                <span className="w-[7px] h-full bg-[#eee] text-[6px] leading-[9px] text-center">▸</span>
              </div>
              <div className="mt-[5px] w-[177px] flex justify-between pr-[2px] h-[12px]"><span>0.00999999605</span><span>1</span></div>
              <div className="flex items-center mt-[3px] h-[16px]"><span className="w-[54px] whitespace-nowrap">Increment by:</span><Input t={<span className="ml-auto">1</span>} c="w-[57px]" /></div>
              <div className="flex items-center mt-[3px] h-[16px]">
                <span className="w-[54px] whitespace-nowrap">Show values:</span><Combo t="Above" c="w-[58px]" />
                <Chk c="ml-[12px]" /><span className="ml-[3px]">Color</span><span className="ml-[7px] w-[10px] h-[10px] bg-[#0808c8] border border-[#6a6ae0]" />
              </div>
            </div>
            <div className="flex-1 pt-[5px] pl-[7px] relative">
              <div className="h-[12px]">Clipped geometry:</div>
              <div className="flex items-center mt-[3px] ml-[6px] h-[12px]"><Chk /><span className="ml-[6px]">Features</span></div>
              <div className="flex items-center mt-[2px] ml-[6px] h-[12px]"><Chk /><span className="ml-[6px]">Transparent</span></div>
              <Btn t="Clear Iso" c="mt-[33px] ml-[4px] w-[74px] h-[17px]" />
              <Btn t="Projection Rules..." c="mt-[3px] ml-[4px] w-[74px] h-[16px]" />
            </div>
          </div>
          <div className="flex-1 min-h-0 border-t border-t-[#bbb] bg-white mb-[2px] relative">
            <span className="absolute right-[3px] bottom-[1px] w-[10px] h-[3px] border-y border-y-[#888]" />
          </div>
        </div>
      </div>
      {/* status */}
      <div className="h-[17px] flex items-center pl-[3px] bg-[#f2f2f2] text-[#333] shrink-0">0 entities selected</div>
      {/* taskbar */}
      <div className="h-[30px] flex items-center bg-gradient-to-b from-[#1a1a1e] to-[#0b0b0f] shrink-0">
        <svg viewBox="0 0 30 30" className="w-[30px] h-[30px] ml-[5px] shrink-0">
          <circle cx="15" cy="15" r="14" fill="#2f7fb8" stroke="#9bb7c8" /><path d="M9 10l5-1v5l-5 1z" fill="#ee5a2a" /><path d="M15 9l5-1v5l-5 1z" fill="#8cc63f" /><path d="M9 16l5-1v5l-5 1z" fill="#3aa0e8" /><path d="M15 15l5-1v5l-5 1z" fill="#f6c21c" />
        </svg>
        <span className="ml-[9px] w-[42px] h-[27px] bg-[#3c3e44] border border-[#5a5a5e] rounded-[2px] flex items-center justify-center">
          <svg viewBox="0 0 24 20" className="w-[24px] h-[20px]"><path d="M1 3h8l2 2h12v13H1z" fill="#e8c86a" /><rect x="3" y="7" width="18" height="4" fill="#a8d4e8" /><path d="M1 10h22v8H1z" fill="#f5e09a" /></svg>
        </span>
        <span className="ml-[3px] w-[42px] h-[27px] bg-[#3c3e44] border border-[#5a5a5e] rounded-[2px] flex items-center justify-center">
          <svg viewBox="0 0 20 20" className="w-[22px] h-[22px]"><circle cx="10" cy="10" r="9.500" fill="#e8a020" /><path d="M10 .5A9.500 9.500 0 0 1 19 7H10z" fill="#d93a2b" /><path d="M1.500 6A9.500 9.500 0 0 0 9 19.500L13 12z" fill="#3aa24a" /><circle cx="10" cy="10" r="4" fill="#3f80e0" stroke="#fff" /></svg>
        </span>
        <span className="ml-[13px] w-[22px] h-[22px] flex items-center justify-center">
          <svg viewBox="0 0 20 20" className="w-[22px] h-[22px]"><path d="M2 4l14-2 2 15L4 19z" fill="#2e6fa8" stroke="#e0e8f0" /><path d="M4 15L15 2l2 2L8 16z" fill="#d8c850" /></svg>
        </span>
        <span className="ml-[13px] w-[40px] h-[28px] bg-[#8f9194] border border-[#bdbdbd] rounded-[2px] flex items-center justify-center">
          <svg viewBox="0 0 16 16" className="w-[20px] h-[20px]"><path d="M1 2l13 1-4 12L3 10z" fill="none" stroke="#c23a3a" strokeWidth="1.400" /></svg>
        </span>
        <span className="ml-[5px] w-[40px] h-[27px] bg-[#3a3b40] border border-[#5a5a5e] rounded-[2px] flex items-center justify-center">
          <span className="w-[22px] h-[22px] bg-[#c8252a] text-white font-bold text-[10px] flex items-center justify-center tracking-[-0.5px]">SW</span>
        </span>
        <span className="ml-[6px] w-[42px] h-[27px] bg-[#3a3b40] border border-[#5a5a5e] rounded-[2px] flex items-center justify-center">
          <svg viewBox="0 0 20 20" className="w-[21px] h-[21px]"><rect x="1" y="1" width="18" height="18" fill="#c81818" /><path d="M4 16c4-2 6-7 6-12 0 5 3 8 6 8-5 0-9 1-12 4z" fill="none" stroke="#fff" strokeWidth="1.400" /></svg>
        </span>
        <span className="ml-[3px] w-[43px] h-[27px] bg-[#3a3b40] border border-[#5a5a5e] rounded-[2px] flex items-center justify-center">
          <svg viewBox="0 0 16 16" className="w-[20px] h-[20px]"><path d="M1 2l13 1-4 12L3 10z" fill="none" stroke="#b03036" strokeWidth="1.400" /></svg>
        </span>
        <div className="ml-auto flex items-center text-[#e4e4e4] pr-[20px]">
          <span className="w-0 h-0 border-l-[3px] border-r-[3px] border-b-[3px] border-l-transparent border-r-transparent border-b-white" />
          <svg viewBox="0 0 16 16" className="w-[11px] h-[11px] ml-[9px]"><path d="M1 1h6v6H1zM9 1h6v6H9zM1 9h6v6H1zM9 9h6v6H9z" fill="#f4f4f4" /></svg>
          <svg viewBox="0 0 16 16" className="w-[11px] h-[11px] ml-[6px]"><path d="M3 1v14" stroke="#eee" strokeWidth="1.500" /><path d="M4 2h10l-2 3 2 3H4z" fill="#eee" /></svg>
          <svg viewBox="0 0 16 16" className="w-[11px] h-[12px] ml-[7px]"><rect x="2" y="3" width="9" height="12" fill="none" stroke="#eee" strokeWidth="1.500" /><path d="M11 1l-2 5h3l-2 5" stroke="#eee" fill="none" /></svg>
          <svg viewBox="0 0 16 16" className="w-[12px] h-[11px] ml-[7px]"><path d="M1 13h2v2H1zM5 10h2v5H5zM9 6h2v9H9zM13 2h2v13h-2z" fill="#eee" /></svg>
          <svg viewBox="0 0 16 16" className="w-[12px] h-[11px] ml-[3px]"><path d="M2 5h4l5-4v14l-5-4H2z" fill="#eee" /></svg>
          <span className="ml-[14px] flex flex-col items-center text-[8.800px] tracking-normal leading-[13px]"><span>19:55</span><span>31/08/2015</span></span>
        </div>
      </div>
    </div>
  );
}
